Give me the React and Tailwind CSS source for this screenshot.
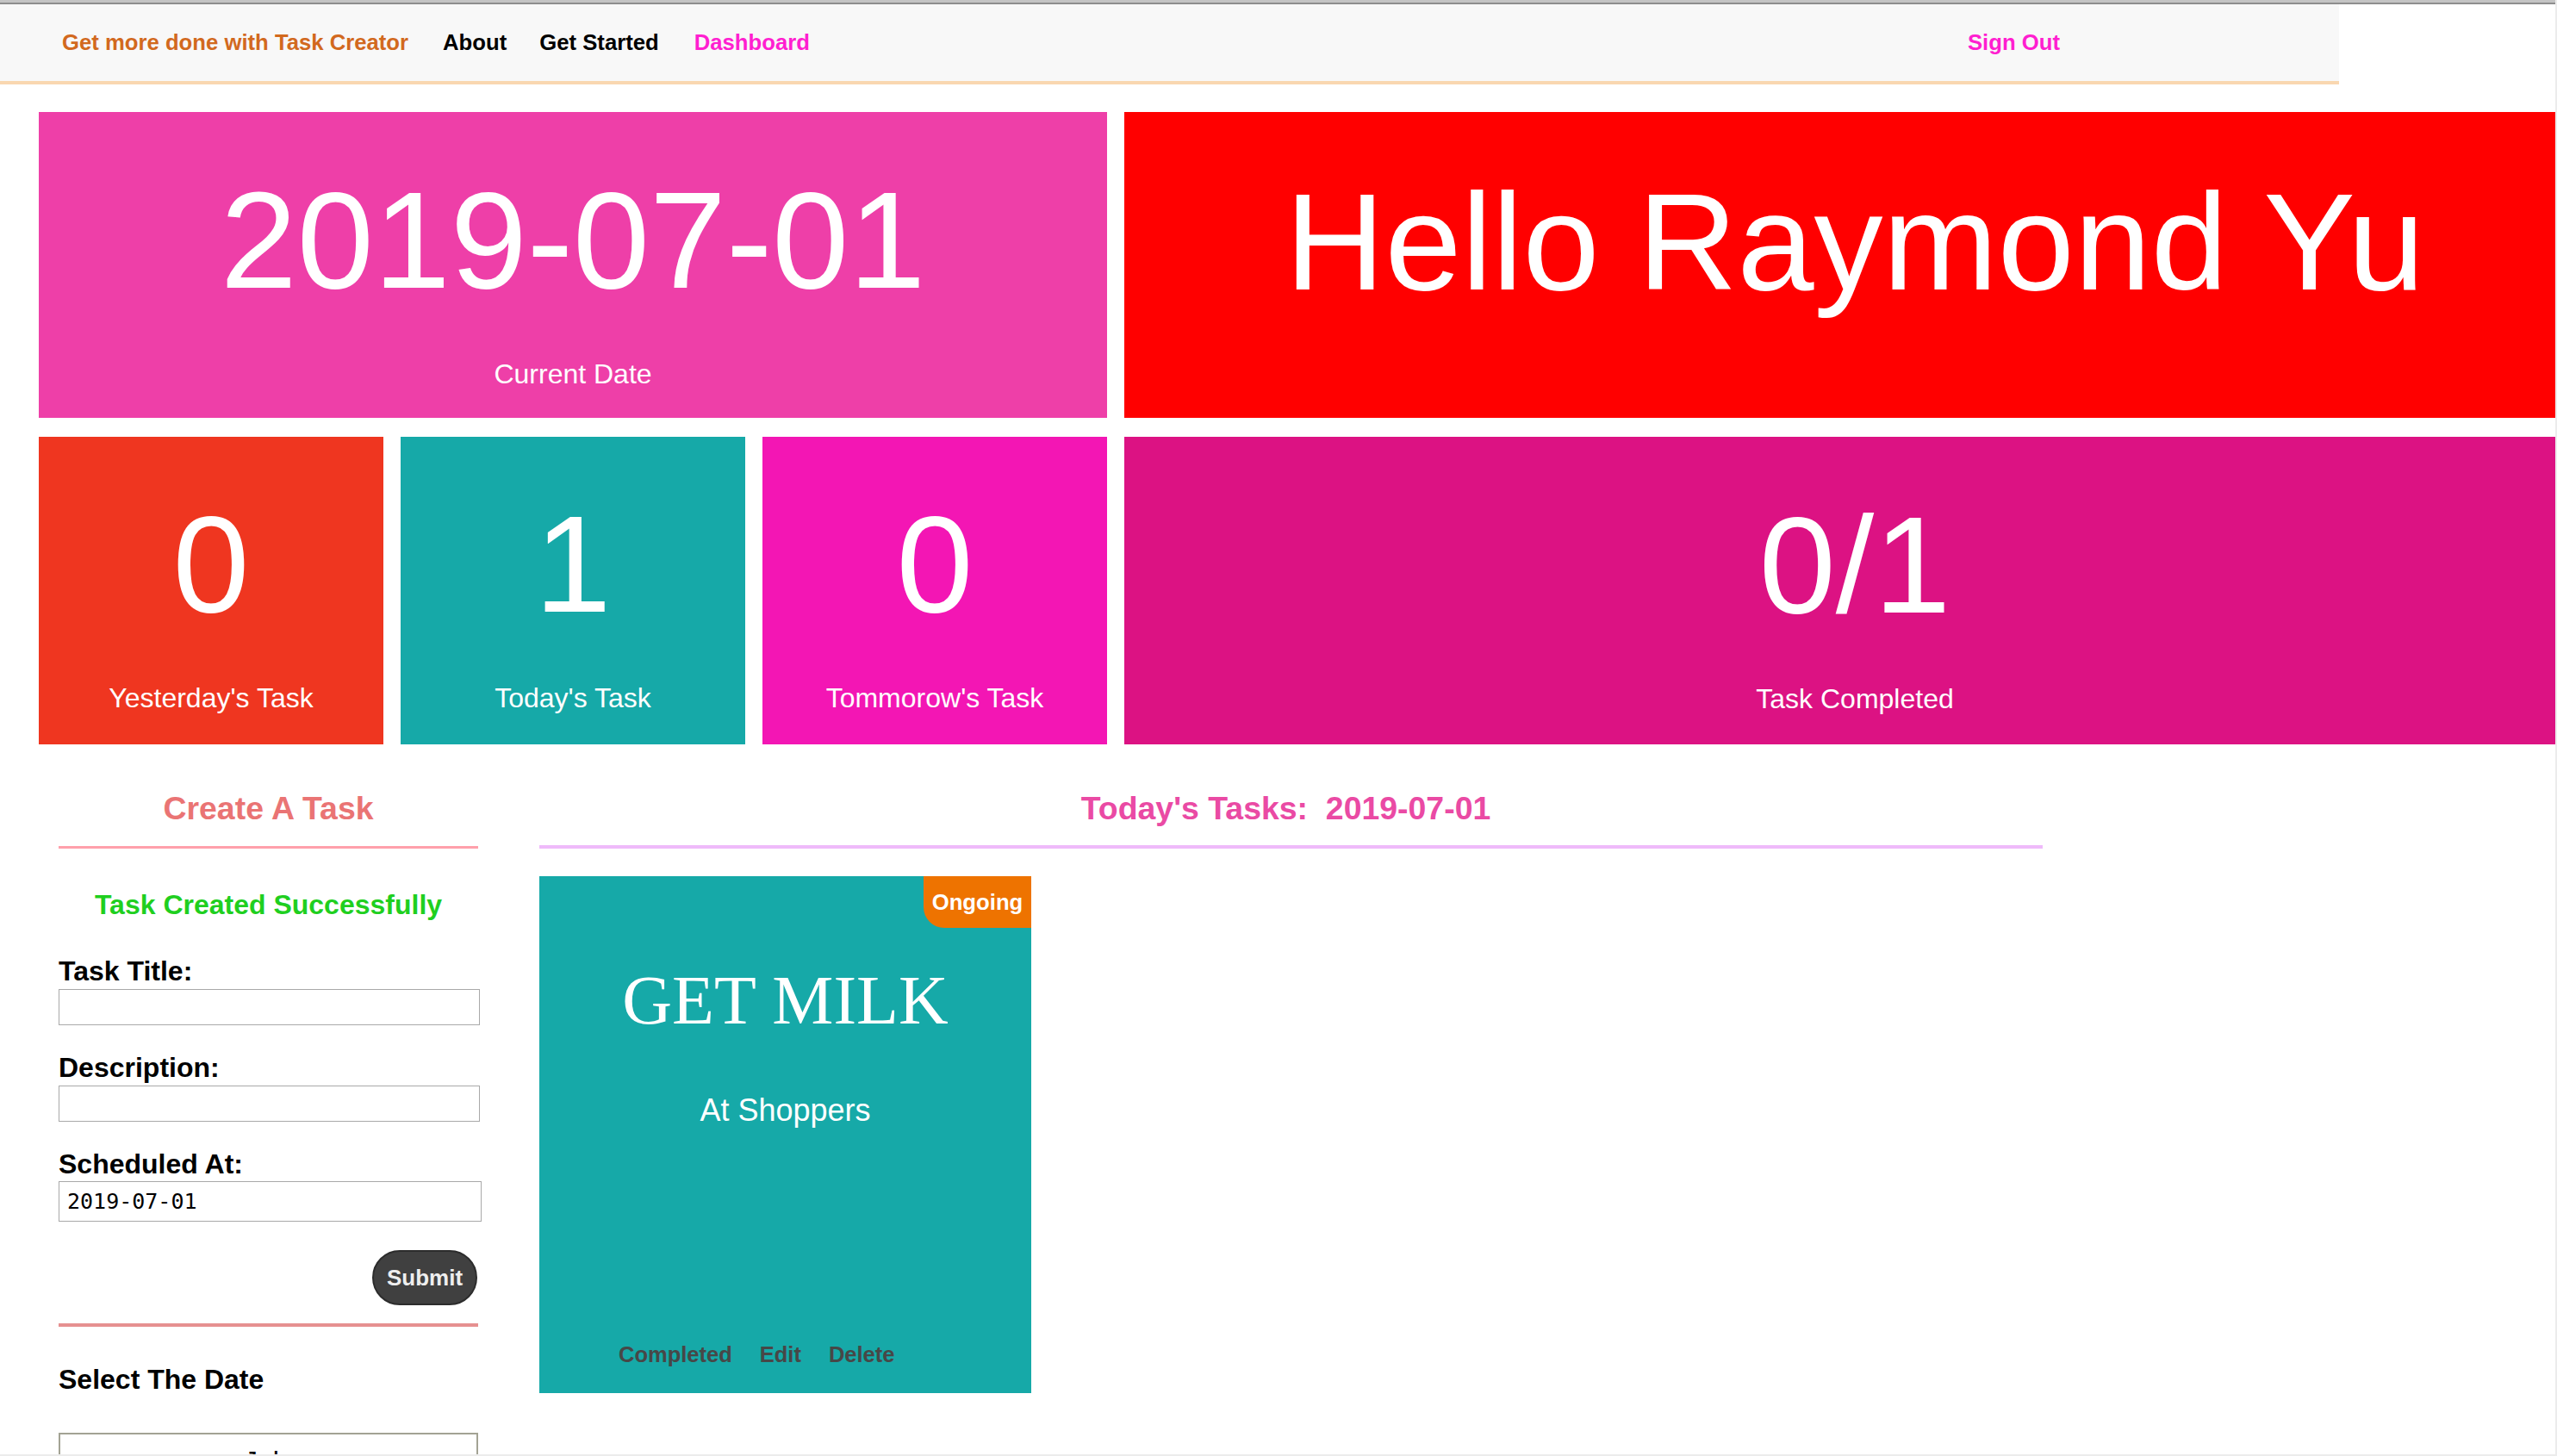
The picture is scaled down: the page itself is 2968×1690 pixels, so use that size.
function StatCard({ className, value, label }) {
  return (
    <div className={className}>
      <div className="text-[160px] leading-none text-white">{value}</div>
      <div className="mt-[59px] text-[32px] leading-none text-white">{label}</div>
    </div>
  );
}

export default function App() {
  return (
    <div className="w-[2968px] h-[1690px] overflow-hidden bg-white border-r-2 border-b-2 border-[#ececec] font-['Liberation_Sans',Arial,sans-serif]">
      <div className="h-[3px] bg-[#c4c4c4]" />
      <div className="h-[2px] bg-[#8e8e8e]" />
      <nav className="w-[2715px] h-[93px] bg-[#f8f8f8] border-b-4 border-[#f9d7b0] flex items-center pl-[72px] pr-[324px] text-[25.7px] font-bold">
        <span className="text-[#d2691e]">Get more done with Task Creator</span>
        <span className="ml-[40px] text-black">About</span>
        <span className="ml-[38px] text-black">Get Started</span>
        <span className="ml-[41px] text-[#ff1fd0]">Dashboard</span>
        <span className="ml-auto text-[#ff1fd0]">Sign Out</span>
      </nav>

      <div className="mt-[32px] ml-[45px] flex flex-col gap-[22px]">
        <div className="flex gap-[20px]">
          <StatCard
            className="w-[1240px] h-[355px] shrink-0 bg-[#ee3fa8] flex flex-col items-center pt-[69px]"
            value="2019-07-01"
            label="Current Date"
          />
          <div className="w-[1696px] h-[355px] shrink-0 bg-[#ff0000] flex flex-col items-center pt-[71px]">
            <div className="text-[160px] leading-none text-white">Hello Raymond Yu</div>
          </div>
        </div>
        <div className="flex gap-[20px]">
          <StatCard
            className="w-[400px] h-[357px] shrink-0 bg-[#ef3620] flex flex-col items-center pt-[68px]"
            value="0"
            label="Yesterday's Task"
          />
          <StatCard
            className="w-[400px] h-[357px] shrink-0 bg-[#16a9a8] flex flex-col items-center pt-[68px]"
            value="1"
            label="Today's Task"
          />
          <StatCard
            className="w-[400px] h-[357px] shrink-0 bg-[#f316b4] flex flex-col items-center pt-[68px]"
            value="0"
            label="Tommorow's Task"
          />
          <StatCard
            className="w-[1696px] h-[357px] shrink-0 bg-[#dc1283] flex flex-col items-center pt-[69px]"
            value="0/1"
            label="Task Completed"
          />
        </div>
      </div>

      <div className="flex mt-[56px]">
        <div className="ml-[68px] w-[487px] shrink-0 flex flex-col">
          <h3 className="text-[37.44px] leading-none font-bold text-center text-[#ea7474]">Create A Task</h3>
          <div className="mt-[25px] h-[3px] bg-[#ffa0ab]" />
          <div className="mt-[49px] text-[32px] leading-none font-bold text-center text-[#1fcf1f]">
            Task Created Successfully
          </div>
          <label className="mt-[45px] text-[32px] leading-none font-bold text-black">Task Title:</label>
          <input
            type="text"
            readOnly
            className="mt-[5px] w-[489px] h-[42px] border border-[#a9a9a9] bg-white"
          />
          <label className="mt-[33px] text-[32px] leading-none font-bold text-black">Description:</label>
          <input
            type="text"
            readOnly
            className="mt-[5px] w-[489px] h-[42px] border border-[#a9a9a9] bg-white"
          />
          <label className="mt-[33px] text-[32px] leading-none font-bold text-black">Scheduled At:</label>
          <input
            type="text"
            readOnly
            value="2019-07-01"
            className="mt-[4px] w-[491px] h-[47px] border border-[#a9a9a9] bg-white pl-[9px] text-[25px] text-black font-['DejaVu_Sans_Mono',monospace]"
          />
          <button className="mt-[33px] self-end mr-[1px] w-[122px] h-[64px] rounded-full bg-[#404040] border-2 border-[#2c2c2c] text-[#eeeeee] font-bold text-[26px] leading-none">
            Submit
          </button>
          <div className="mt-[21px] h-[4px] bg-[#e69090]" />
          <div className="mt-[45px] text-[32px] leading-none font-bold text-black">Select The Date</div>
          <div className="mt-[46px] h-[120px] border-2 border-[#a3a394] flex justify-center pt-[15px] text-[32px] leading-none text-black">
            July
          </div>
        </div>

        <div className="ml-[71px] w-[1745px] shrink-0 flex flex-col">
          <h3 className="pr-[12px] text-[37.44px] leading-none font-bold text-center text-[#ea4aa4] whitespace-pre">
            {"Today's Tasks:  2019-07-01"}
          </h3>
          <div className="mt-[24px] h-[4px] bg-[#efbafa]" />
          <div className="mt-[32px] relative w-[571px] h-[600px] bg-[#16a9a8] flex flex-col items-center">
            <div className="absolute top-0 right-0 w-[125px] h-[60px] bg-[#ee7300] rounded-bl-[24px] flex items-center justify-center text-white font-bold text-[25.7px] leading-none">
              Ongoing
            </div>
            <div className="mt-[104px] text-[80px] leading-none text-white font-['Liberation_Serif','Times_New_Roman',serif]">
              GET MILK
            </div>
            <div className="mt-[70px] text-[36px] leading-none text-white">At Shoppers</div>
            <div className="mt-auto mb-[32px] self-start pl-[92px] flex gap-[32px] text-[25.5px] leading-none font-bold text-[#474747]">
              <span>Completed</span>
              <span>Edit</span>
              <span>Delete</span>
            </div>
          </div>
        </div>
      </div>
    </div>
  );
}
